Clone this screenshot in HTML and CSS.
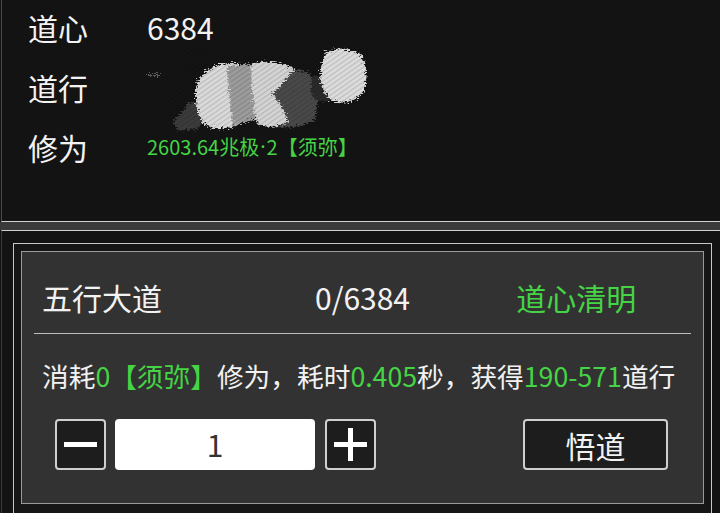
FILE: index.html
```html
<!DOCTYPE html>
<html lang="zh">
<head>
<meta charset="utf-8">
<link rel="stylesheet" href="styles.css">
</head>
<body>
<div class="top">
  <div class="row"><span class="lbl">道心</span><span class="val">6384</span></div>
  <div class="row"><span class="lbl">道行</span><span class="val">
    <svg class="scribble" width="222" height="80" viewBox="0 0 222 80">
      <defs>
        <filter id="rough" x="-10%" y="-10%" width="120%" height="120%">
          <feTurbulence type="fractalNoise" baseFrequency="0.35 0.9" numOctaves="2" seed="3" result="n"/>
          <feDisplacementMap in="SourceGraphic" in2="n" scale="9" xChannelSelector="R" yChannelSelector="G"/>
        </filter>
        <pattern id="streak" width="4" height="4" patternUnits="userSpaceOnUse" patternTransform="rotate(-35)">
          <rect x="0" y="0" width="4" height="1.2" fill="#000" fill-opacity="0.14"/>
        </pattern>
      </defs>
      <g filter="url(#rough)">
        <rect x="0" y="27" width="14" height="2" fill="#5a5a5a"/>
        <g transform="translate(0,-6) scale(1,1.15)">
          <path d="M26,70 L44,52 L58,58 L52,76 L32,78 Z" fill="#3a3a3a"/>
          <path d="M116,32 Q140,20 162,28 Q174,46 168,68 Q150,78 126,74 Q114,58 116,32 Z" fill="#4a4a4a"/>
          <path d="M52,32 Q70,16 92,20 Q98,46 94,72 Q72,80 56,72 Q44,52 52,32 Z" fill="#dadada"/>
          <path d="M80,22 L106,20 Q110,46 108,68 L86,74 Q82,48 80,22 Z" fill="#9c9c9c"/>
          <path d="M104,20 Q124,14 148,24 Q138,36 126,46 Q136,58 142,70 Q124,78 110,72 Q104,46 104,20 Z" fill="#d4d4d4"/>
        </g>
        <path d="M164,30 Q176,26 184,34 L182,54 Q170,56 164,48 Z" fill="#2c2c2c"/>
        <path d="M178,6 Q196,-4 214,8 Q224,26 216,46 Q200,62 182,52 Q170,34 174,20 Z" fill="#dcdcdc"/>
      </g>
      <rect x="20" y="0" width="202" height="80" fill="url(#streak)"/>
    </svg></span></div>
  <div class="row"><span class="lbl">修为</span><span class="val green small">2603.64兆极<span class="dot">·</span>2【须弥】</span></div>
</div>
<div class="band"></div>
<div class="bottom">
  <div class="outer">
    <div class="inner">
      <div class="head">
        <span class="c1">五行大道</span>
        <span class="c2">0/6384</span>
        <span class="c3 green">道心清明</span>
      </div>
      <div class="sep"></div>
      <div class="desc">消耗<span class="green">0【须弥】</span>修为，耗时<span class="green">0.405</span>秒，获得<span class="green">190-571</span>道行</div>
      <div class="ctrl">
        <div class="btn sq">
          <svg width="33" height="33" viewBox="0 0 33 33"><rect x="0" y="14" width="33" height="5" fill="#fff"/></svg>
        </div>
        <div class="num">1</div>
        <div class="btn sq">
          <svg width="33" height="33" viewBox="0 0 33 33"><rect x="0" y="14" width="33" height="5" fill="#fff"/><rect x="14" y="0" width="5" height="33" fill="#fff"/></svg>
        </div>
        <div class="btn go">悟道</div>
      </div>
    </div>
  </div>
</div>
</body>
</html>
```

FILE: styles.css
```css
html, body {
  margin: 0;
  padding: 0;
  background: #131313;
  overflow: hidden;
}
body {
  width: 720px;
  height: 513px;
  font-family: "Noto Sans CJK SC", "Noto Sans", sans-serif;
  color: #f2f2f2;
}
.green { color: #45d445; }

.top {
  margin-left: 1px;
  height: 214px;
  padding: 7px 0 0 26px;
  border-left: 1px solid #4a4a4a;
  border-bottom: 1px solid #d0d0d0;
  background: #131313;
  display: flex;
  flex-direction: column;
  gap: 20px;
}
.row {
  height: 40px;
  display: flex;
  align-items: center;
}
.lbl {
  width: 119px;
  font-size: 30px;
  line-height: 40px;
}
.val {
  font-size: 30px;
  line-height: 40px;
  display: flex;
  align-items: center;
  height: 40px;
}
.val.small { font-size: 20px; white-space: pre; }
.dot { font-family: "Noto Sans", sans-serif; margin: 0 1px; }
.scribble { display: block; overflow: visible; }

.band {
  height: 8px;
  background: #3a3a3a;
}
.bottom {
  margin-left: 1px;
  border-top: 1px solid #d0d0d0;
  border-left: 1px solid #3a3a3a;
  background: #131313;
  padding: 12px 0 0 11px;
}
.outer {
  box-sizing: border-box;
  width: 699px;
  height: 300px;
  border: 1px solid #c8c8c8;
  padding: 7px;
  background: #161616;
}
.inner {
  box-sizing: border-box;
  height: 253px;
  border: 1px solid #9a9a9a;
  background: #323232;
}
.head {
  box-sizing: border-box;
  height: 81px;
  padding: 9px 20px 0;
  display: grid;
  grid-template-columns: 1fr 1fr 1fr;
  font-size: 30px;
  line-height: 72px;
}
.c1 { text-align: left; }
.c2, .c3 { text-align: center; }
.sep {
  height: 1px;
  margin: 0 12px;
  background: #bdbdbd;
}
.desc {
  padding: 24px 0 0 20px;
  font-size: 26.7px;
  line-height: 36px;
  white-space: nowrap;
}
.ctrl {
  margin-top: 25px;
  padding: 0 35px 0 33px;
  display: flex;
  align-items: center;
}
.btn {
  box-sizing: border-box;
  height: 51px;
  border: 2px solid #cfcfcf;
  border-radius: 4px;
  background: #1d1d1d;
  display: flex;
  align-items: center;
  justify-content: center;
}
.sq { width: 51px; }
.num {
  box-sizing: border-box;
  width: 200px;
  height: 51px;
  margin: 0 9px;
  border-radius: 4px;
  background: #ffffff;
  color: #333;
  font-size: 30px;
  line-height: 51px;
  text-align: center;
}
.num + .btn { margin-left: 1px; }
.go {
  width: 145px;
  margin-left: auto;
  font-size: 30px;
  color: #f2f2f2;
}
```
